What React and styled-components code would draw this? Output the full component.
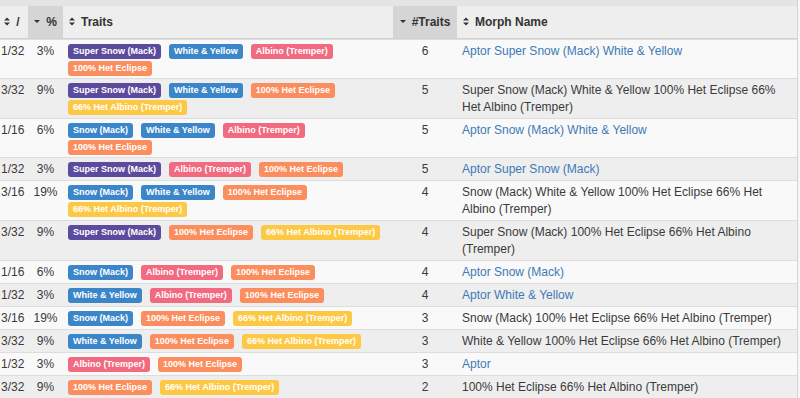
import React from 'react';
import styled, { createGlobalStyle } from 'styled-components';

const GlobalStyle = createGlobalStyle`
  html, body {
    margin: 0;
    padding: 0;
    background: #f7f7f7;
    overflow: hidden;
  }
  body {
    font-family: "Liberation Sans", Arial, sans-serif;
    font-size: 12px;
    color: #333;
  }
`;

const COLORS = {
  purple: '#5c4b9c',
  blue: '#3b86c8',
  pink: '#f26a80',
  orange: '#fb8e5e',
  yellow: '#fdc945',
};

const TRAITS = {
  ssm: { text: 'Super Snow (Mack)', color: 'purple' },
  sm: { text: 'Snow (Mack)', color: 'blue' },
  wy: { text: 'White & Yellow', color: 'blue' },
  alb: { text: 'Albino (Tremper)', color: 'pink' },
  ecl: { text: '100% Het Eclipse', color: 'orange' },
  halb: { text: '66% Het Albino (Tremper)', color: 'yellow' },
};

const ROWS = [
  ['1/32', '3%', ['ssm', 'wy', 'alb', 'ecl'], 6, 'Aptor Super Snow (Mack) White & Yellow', true],
  ['3/32', '9%', ['ssm', 'wy', 'ecl', 'halb'], 5, 'Super Snow (Mack) White & Yellow 100% Het Eclipse 66% Het Albino (Tremper)', false],
  ['1/16', '6%', ['sm', 'wy', 'alb', 'ecl'], 5, 'Aptor Snow (Mack) White & Yellow', true],
  ['1/32', '3%', ['ssm', 'alb', 'ecl'], 5, 'Aptor Super Snow (Mack)', true],
  ['3/16', '19%', ['sm', 'wy', 'ecl', 'halb'], 4, 'Snow (Mack) White & Yellow 100% Het Eclipse 66% Het Albino (Tremper)', false],
  ['3/32', '9%', ['ssm', 'ecl', 'halb'], 4, 'Super Snow (Mack) 100% Het Eclipse 66% Het Albino (Tremper)', false],
  ['1/16', '6%', ['sm', 'alb', 'ecl'], 4, 'Aptor Snow (Mack)', true],
  ['1/32', '3%', ['wy', 'alb', 'ecl'], 4, 'Aptor White & Yellow', true],
  ['3/16', '19%', ['sm', 'ecl', 'halb'], 3, 'Snow (Mack) 100% Het Eclipse 66% Het Albino (Tremper)', false],
  ['3/32', '9%', ['wy', 'ecl', 'halb'], 3, 'White & Yellow 100% Het Eclipse 66% Het Albino (Tremper)', false],
  ['1/32', '3%', ['alb', 'ecl'], 3, 'Aptor', true],
  ['3/32', '9%', ['ecl', 'halb'], 2, '100% Het Eclipse 66% Het Albino (Tremper)', false],
];

const Page = styled.div`
  width: 797px;
  border-right: 1px solid #d4d4d4;
  overflow: hidden;
  background: #e4e4e4;
  padding-top: 6px;
`;

const Table = styled.table`
  margin-left: -4px;
  width: 801px;
  border-collapse: separate;
  border-spacing: 0;
  table-layout: fixed;
`;

const HeadCell = styled.th`
  height: 32px;
  padding: 0 6px;
  background: ${p => (p.$sorted ? '#d5d5d5' : '#eeeeee')};
  border-bottom: 1px solid #d2d2d2;
  font-weight: bold;
  font-size: 12px;
  color: #333;
  text-align: ${p => (p.$center ? 'center' : 'left')};
  white-space: nowrap;
`;

const HeadInner = styled.span`
  display: inline-flex;
  align-items: center;
  gap: 6px;
`;

const Row = styled.tr`
  background: ${p => (p.$odd ? '#f9f9f9' : '#eeeeee')};
`;

const Cell = styled.td`
  padding: 3px 5px 2px;
  border-top: 1px solid #dddddd;
  line-height: 17px;
  vertical-align: top;
  text-align: ${p => (p.$center ? 'center' : 'left')};
  color: #3a3a3a;
`;

const Badges = styled.div`
  display: flex;
  flex-wrap: wrap;
  gap: 2px 8px;
  padding-top: 1px;
`;

const Badge = styled.span`
  display: inline-block;
  height: 15px;
  line-height: 15px;
  padding: 0 5px;
  border-radius: 3px;
  font-size: 9px;
  font-weight: bold;
  color: #fff;
  white-space: nowrap;
  background: ${p => COLORS[p.$color]};
`;

const MorphLink = styled.a`
  color: #3d79b6;
  text-decoration: none;
`;

const SortIcon = ({ dir }) =>
  dir === 'desc' ? (
    <svg width="6" height="9" viewBox="0 0 6 9">
      <path d="M0 3 L6 3 L3 6 Z" fill="#333" />
    </svg>
  ) : (
    <svg width="6" height="9" viewBox="0 0 6 9">
      <path d="M0 3.6 L6 3.6 L3 0.6 Z M0 5.4 L6 5.4 L3 8.4 Z" fill="#333" />
    </svg>
  );

const Head = ({ label, dir, sorted, center }) => (
  <HeadCell $sorted={sorted} $center={center}>
    <HeadInner>
      <SortIcon dir={dir} />
      {label}
    </HeadInner>
  </HeadCell>
);

const App = () => (
  <>
    <GlobalStyle />
    <Page>
      <Table>
        <colgroup>
          <col style={{ width: 32 }} />
          <col style={{ width: 35 }} />
          <col style={{ width: 330 }} />
          <col style={{ width: 64 }} />
          <col style={{ width: 340 }} />
        </colgroup>
        <thead>
          <tr>
            <Head label="/" center />
            <Head label="%" dir="desc" sorted center />
            <Head label="Traits" />
            <Head label="#Traits" dir="desc" sorted center />
            <Head label="Morph Name" />
          </tr>
        </thead>
        <tbody>
          {ROWS.map(([odds, pct, traits, count, name, linked], i) => (
            <Row key={i} $odd={i % 2 === 0}>
              <Cell $center>{odds}</Cell>
              <Cell $center>{pct}</Cell>
              <Cell>
                <Badges>
                  {traits.map(t => (
                    <Badge key={t} $color={TRAITS[t].color}>
                      {TRAITS[t].text}
                    </Badge>
                  ))}
                </Badges>
              </Cell>
              <Cell $center>{count}</Cell>
              <Cell>{linked ? <MorphLink href="#">{name}</MorphLink> : name}</Cell>
            </Row>
          ))}
        </tbody>
      </Table>
    </Page>
  </>
);

export default App;
